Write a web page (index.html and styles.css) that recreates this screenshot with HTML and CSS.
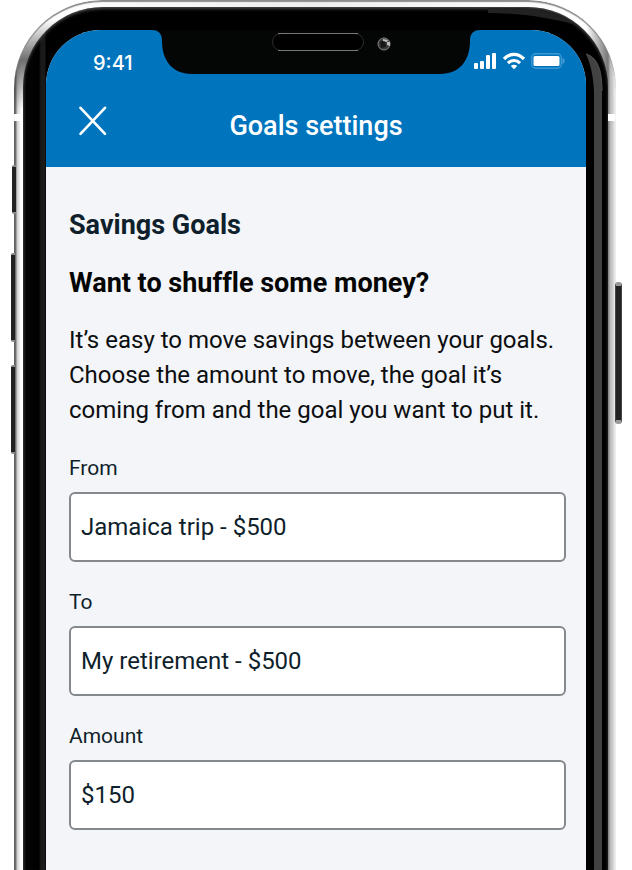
FILE: index.html
```html
<!DOCTYPE html>
<html lang="en">
<head>
  <meta charset="UTF-8">
  <meta name="viewport" content="width=device-width, initial-scale=1">
  <title>Goals settings</title>
  <link rel="stylesheet" href="styles.css">
</head>
<body>
<div class="stage">
  <div class="phone">
    <span class="side-button mute"></span>
    <span class="side-button volume-up"></span>
    <span class="side-button volume-down"></span>
    <span class="side-button power"></span>

    <div class="bezel">
      <svg class="shine" width="120" height="120" viewBox="0 0 120 120" aria-hidden="true">
        <path d="M0 6 C30 6 58 10 89 18 C70 5 50 2 30 1 H0Z" fill="#222"/>
        <path d="M98 47 C108 50 114 60 114 84 V120 H106 V84 C105 66 102 56 98 47Z" fill="#424242"/>
        <path d="M98 47 C108 50 114 60 114 84" fill="none" stroke="#555"/>
      </svg>

      <div class="screen">
        <svg class="notch" width="328" height="44" viewBox="0 0 328 44" aria-hidden="true">
          <path d="M0 0 C7 0 10 4 10 11 C10 30 20 44 40 44 H288 C308 44 318 30 318 11 C318 4 321 0 328 0Z" fill="#040505"/>
          <rect x="120.500" y="3.500" width="91" height="17" rx="8.500" fill="#000" stroke="#2c2c2c"/>
          <path d="M126 3.500 H206 M126 20.500 H206" stroke="#777"/>
          <circle cx="232" cy="14" r="6.500" fill="#3a3a3a"/>
          <circle cx="232" cy="14" r="6" fill="none" stroke="#777"/>
          <path d="M228 12 L233 10 L234 17 L229 18Z" fill="#161616"/>
          <path d="M231 9 L236 10 L235 12 L231 11Z M235 12 H238 V16 L235 15Z" fill="#bbb"/>
        </svg>

        <header class="header">
          <div class="status">
            <span class="time">9:41</span>
            <span class="status-icons">
              <svg width="23" height="18" viewBox="0 0 23 18" aria-hidden="true">
                <g fill="#fff">
                  <rect x="0" y="11" width="4" height="6" rx="1"/>
                  <rect x="6" y="9" width="4" height="8" rx="1"/>
                  <rect x="12" y="3" width="4" height="14" rx="1"/>
                  <rect x="18" y="1" width="4" height="16" rx="1"/>
                </g>
              </svg>
              <svg width="24" height="18" viewBox="0 0 24 18" aria-hidden="true">
                <path d="M2 7 C8 0.800 16 0.800 22 7" fill="none" stroke="#fff" stroke-width="3.400"/>
                <path d="M6 11.200 C9.500 7.600 14.500 7.600 18 11.200" fill="none" stroke="#fff" stroke-width="3.200"/>
                <path d="M8.800 14 C10.700 12.200 13.300 12.200 15.200 14 L12 17.200Z" fill="#fff"/>
              </svg>
              <svg width="34" height="18" viewBox="0 0 34 18" aria-hidden="true">
                <rect x="0.700" y="1.700" width="29.600" height="14.600" rx="4" fill="none" stroke="#3c97d2" stroke-width="1.400"/>
                <path d="M31.500 6 C34.200 7 34.200 11 31.500 12Z" fill="#4d9fd6"/>
                <rect x="2.500" y="4" width="26" height="10" rx="1.500" fill="#fff"/>
              </svg>
            </span>
          </div>
          <div class="title-bar">
            <button type="button" class="close" aria-label="Close">
              <svg width="28" height="30" viewBox="0 0 28 30" aria-hidden="true">
                <path d="M1.500 1.800 L26 27.800 M26 1.800 L1.500 27.800" stroke="#fff" stroke-width="2.600" stroke-linecap="round"/>
              </svg>
            </button>
            <h1 class="title">Goals settings</h1>
          </div>
        </header>

        <main class="content">
          <h2 class="section-title">Savings Goals</h2>
          <h3 class="question">Want to shuffle some money?</h3>
          <p class="intro">It’s easy to move savings between your goals. Choose the amount to move, the goal it’s coming from and the goal you want to put it.</p>

          <form class="form">
            <div class="field">
              <label for="from">From</label>
              <select id="from" class="control">
                <option>Jamaica trip - $500</option>
              </select>
            </div>
            <div class="field">
              <label for="to">To</label>
              <select id="to" class="control">
                <option>My retirement - $500</option>
              </select>
            </div>
            <div class="field">
              <label for="amount">Amount</label>
              <input id="amount" class="control" type="text" value="$150">
            </div>
          </form>
        </main>
      </div>
    </div>
  </div>
</div>
</body>
</html>
```

FILE: styles.css
```css
* {
  box-sizing: border-box;
}

body {
  margin: 0;
  background: #fff;
  color: #0f1f2b;
  font-family: Roboto, "Liberation Sans", sans-serif;
  font-variant-ligatures: none;
}

.stage {
  padding: 0 16px 0 14px;
}

/* metal frame */
.phone {
  position: relative;
  display: flex;
  min-height: 100vh;
  padding: 7px 8px 0 9px;
  border-radius: 88px 88px 0 0;
  background:
    linear-gradient(#fff, #fff) 0 114px / 100% 7px no-repeat,
    linear-gradient(transparent 20px, rgba(50, 50, 50, 0.7) 60px, transparent 110px) 0 0 / 50% 110px no-repeat,
    linear-gradient(to right, #555 0, #777 2px, #ccc 3px, #fff 7px, #eee 50%, #fff calc(100% - 30px), #777 calc(100% - 8px), #b5b5b5 calc(100% - 6px), #d0d0d0 calc(100% - 3px), #fff 100%);
  box-shadow: inset 0 2px 1px #8d8b8b;
}

.bezel {
  position: relative;
  display: flex;
  flex: 1;
  padding: 23px 22px 0 23px;
  border-radius: 80px 80px 0 0;
  background:
    linear-gradient(#424242, #424242) right 6px top 119px / 8px 100% no-repeat,
    linear-gradient(to right, #222 0, #050505 3px, #000 16px, #1a1a1a 18px, #1a1a1a 22px, #000 23px);
  box-shadow: inset 0 2px 3px #444;
}

.shine {
  position: absolute;
  top: 0;
  right: 0;
}

.screen {
  position: relative;
  flex: 1;
  overflow: hidden;
  border-radius: 55px 55px 0 0;
  background: #f3f5f8;
}

.notch {
  position: absolute;
  top: 0;
  left: 50%;
  transform: translateX(-50%);
}

/* side buttons */
.side-button {
  position: absolute;
  left: -3px;
  width: 4px;
  border: solid #888;
  border-width: 2px 0;
  border-radius: 2px 0 0 2px;
  background: #222;
}

.mute {
  top: 165px;
  left: -2px;
  height: 49px;
}

.volume-up {
  top: 253px;
  height: 89px;
}

.volume-down {
  top: 365px;
  height: 89px;
}

.power {
  top: 282px;
  right: -6px;
  left: auto;
  width: 7px;
  height: 142px;
  border-width: 4px 1px;
  border-color: #999 #444;
  border-radius: 3px;
}

/* header */
.header {
  padding-bottom: 11px;
  background: #0075be;
  color: #fff;
}

.status {
  display: flex;
  align-items: center;
  justify-content: space-between;
  height: 66px;
  padding: 0 21px 0 47px;
}

.time {
  font: 500 20px/24px Inter, "Liberation Sans", sans-serif;
}

.status-icons {
  display: flex;
  align-items: center;
  gap: 5px;
  padding-bottom: 4px;
}

.title-bar {
  display: grid;
  grid-template-columns: 1fr auto 1fr;
  align-items: center;
  height: 60px;
  padding: 0 33px;
}

.close {
  justify-self: start;
  padding: 0 0 10px;
  border: 0;
  background: none;
  cursor: pointer;
}

.close svg {
  display: block;
}

.title {
  margin: 0;
  font-size: 27px;
  font-weight: 500;
  line-height: 32px;
}

/* content */
.content {
  padding: 42px 20px 40px 23px;
}

.section-title,
.question {
  margin: 0 0 26px;
  font-size: 27px;
  font-weight: 700;
  line-height: 32px;
}

.question {
  margin-bottom: 24px;
  color: #050505;
}

.intro {
  margin: 0 0 28px;
  color: #0c0e10;
  font-size: 24px;
  line-height: 35px;
}

.form {
  display: grid;
  gap: 28px;
}

.field {
  display: grid;
  gap: 12px;
}

.field label {
  font-size: 21px;
  line-height: 24px;
}

.control {
  width: 100%;
  height: 70px;
  padding: 0 10px;
  border: 2px solid #85888c;
  border-radius: 6px;
  background: #fff;
  color: inherit;
  font: 24px/32px Roboto, "Liberation Sans", sans-serif;
  appearance: none;
}
```
